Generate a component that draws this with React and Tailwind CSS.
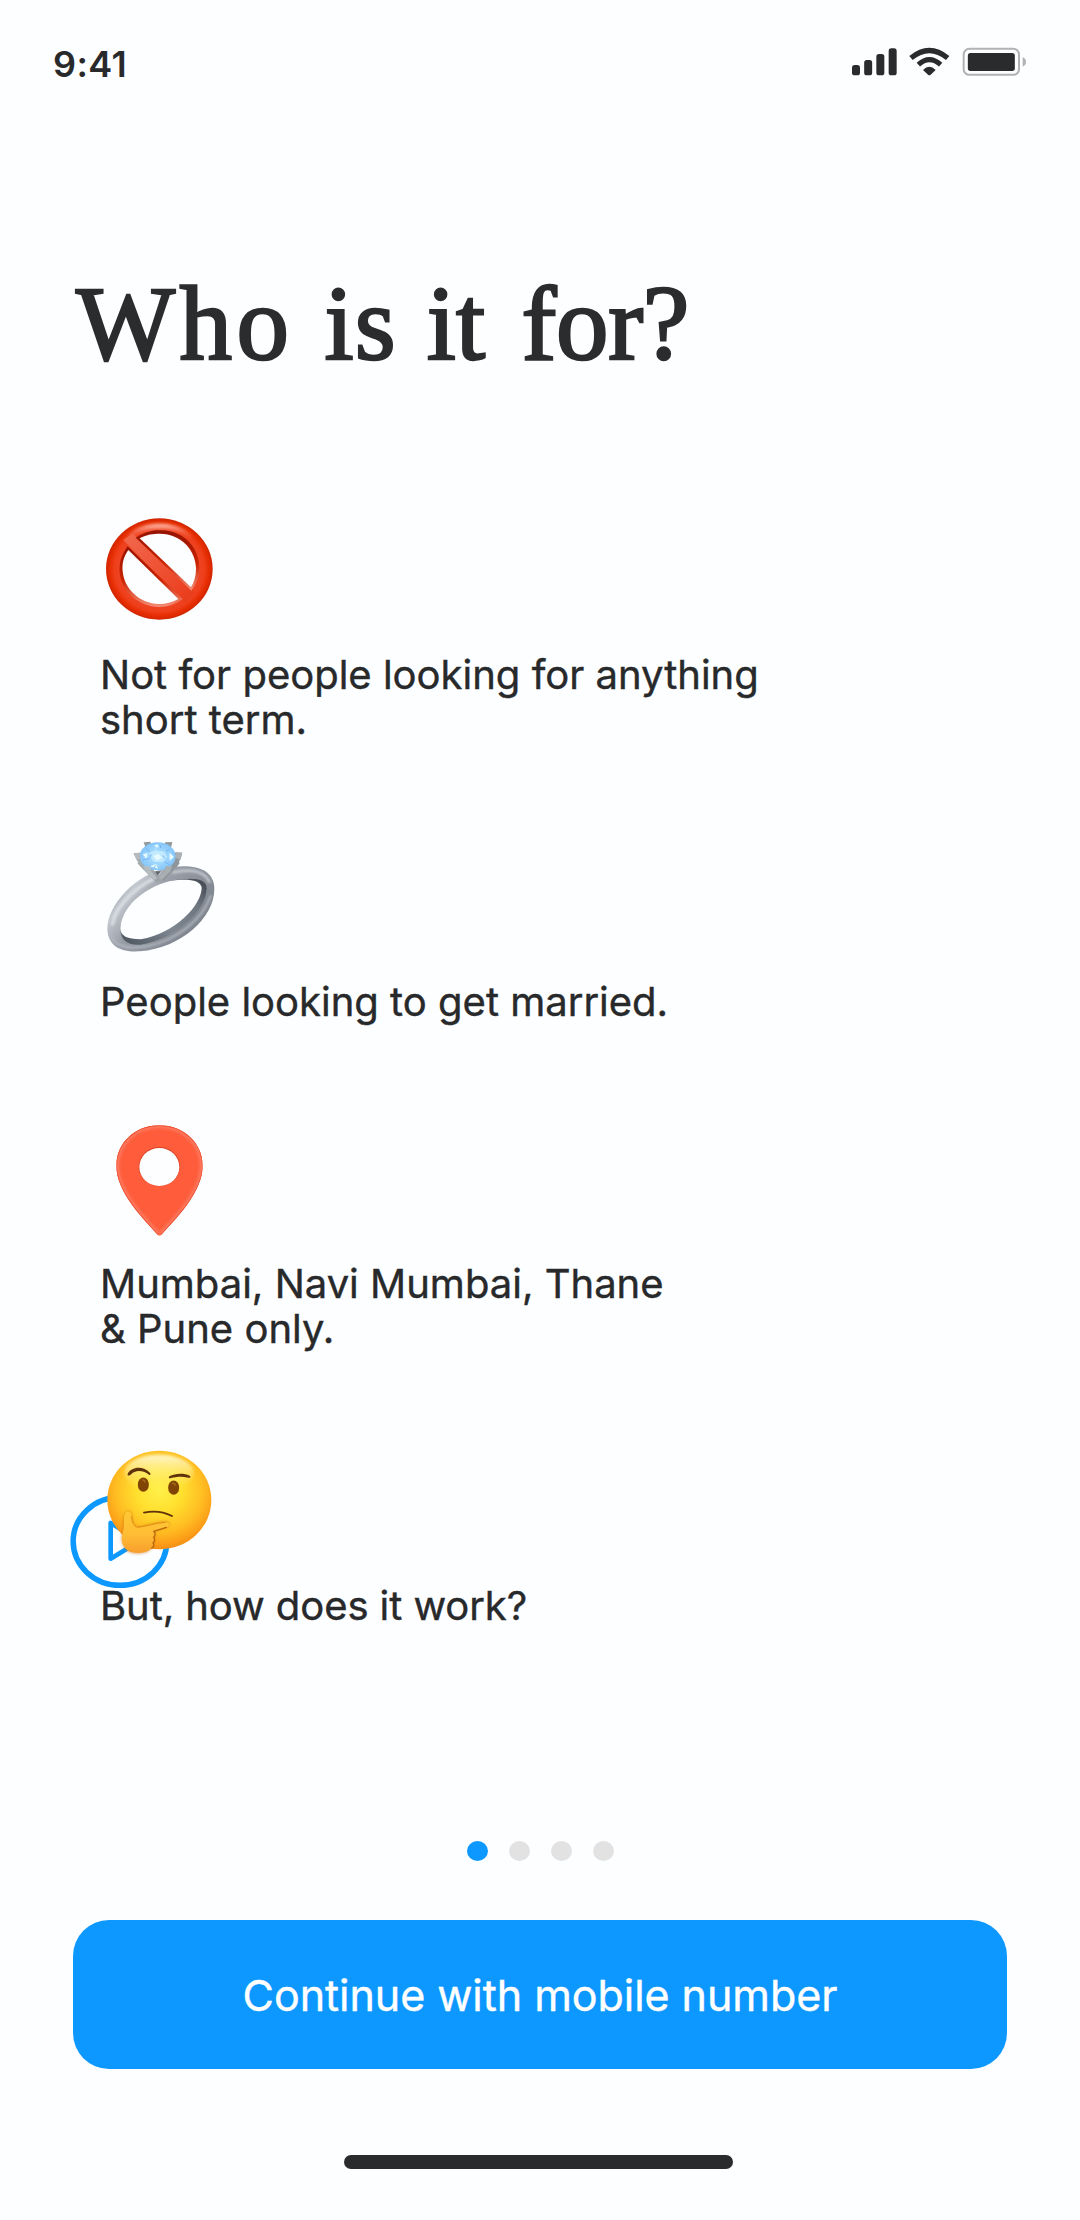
import React from "react";

function StatusIcons() {
  return (
    <svg className="mt-[2px] h-8 w-[178px]" viewBox="60 48 534 96" fill="#2a2b2d">
      <rect x="66" y="105" width="24" height="31" rx="8" />
      <rect x="102.5" y="90" width="24" height="46" rx="8" />
      <rect x="139" y="72" width="24" height="64" rx="8" />
      <rect x="176" y="55" width="24" height="81" rx="8" />
      <path d="M243 84Q298 39 353 84" fill="none" stroke="#2a2b2d" strokeWidth="16" />
      <path d="M265 104Q298 74 332 104" fill="none" stroke="#2a2b2d" strokeWidth="15" />
      <path d="M279 120Q298 101 317 120L302 134Q298 138 294 134Z" />
      <rect x="401" y="56.5" width="166" height="78" rx="17" fill="none" stroke="#b1b2b4" strokeWidth="6" />
      <rect x="413.500" y="69" width="141" height="54" rx="8" />
      <path d="M578 81Q588 86 588 96T578 110Z" fill="#b1b2b4" />
    </svg>
  );
}

function ProhibitedIcon() {
  return (
    <svg className="block size-[120px]" viewBox="30 27 360 360">
      <defs>
        <radialGradient id="banBody" cx="0.5" cy="0.5" r="0.5">
          <stop offset="0.66" stopColor="#ef4726" />
          <stop offset="0.84" stopColor="#ee3f1c" />
          <stop offset="0.93" stopColor="#e62c00" />
          <stop offset="1" stopColor="#cf2600" />
        </radialGradient>
        <linearGradient id="banShine" x1="0" y1="0" x2="0" y2="1">
          <stop offset="0" stopColor="#ffc9bb" stopOpacity="0.95" />
          <stop offset="0.28" stopColor="#ff9a84" stopOpacity="0.5" />
          <stop offset="0.6" stopColor="#ff8065" stopOpacity="0" />
        </linearGradient>
        <linearGradient id="banBar" x1="0" y1="0" x2="1" y2="1">
          <stop offset="0" stopColor="#f0694e" />
          <stop offset="0.35" stopColor="#f0583c" />
          <stop offset="0.75" stopColor="#ec4626" />
          <stop offset="1" stopColor="#e83818" />
        </linearGradient>
        <linearGradient id="banEdge" x1="0" y1="0" x2="0" y2="1">
          <stop offset="0" stopColor="#951300" />
          <stop offset="0.55" stopColor="#c92300" />
          <stop offset="1" stopColor="#f58d78" />
        </linearGradient>
        <filter id="banSoft" x="-20%" y="-20%" width="140%" height="140%">
          <feGaussianBlur stdDeviation="5" />
        </filter>
      </defs>
      <ellipse cx="208" cy="207" rx="160" ry="152" fill="url(#banBody)" />
      <path d="M84 150C108 91 155 71 209 71S310 92 334 150C300 105 265 88 209 88S118 108 84 150Z" fill="url(#banShine)" filter="url(#banSoft)" />
      <path d="M100 120L128 100L315 278L284 310Z" fill="url(#banBar)" />
      <path d="M137 113C170 92 197 90 214 91C285 93 328 145 328 205C328 232 319 253 304 272Z" fill="url(#banEdge)" />
      <path d="M113 139C93 166 87 191 89 217C94 277 148 320 207 321C234 321 257 313 278 297Z" fill="url(#banEdge)" />
      <path d="M149 115C171 103 190 101 210 101C273 102 317 149 318 207C318 226 313 246 303 262Z" fill="#fdfeff" />
      <path d="M115 150C101 170 96 190 98 213C102 267 150 311 207 312C228 312 247 307 265 297Z" fill="#fdfeff" />
    </svg>
  );
}

function RingIcon() {
  return (
    <svg className="block size-[120px]" viewBox="30 51 360 360">
      <defs>
        <linearGradient id="ringBand" x1="0" y1="0.2" x2="1" y2="0.8">
          <stop offset="0" stopColor="#7d838c" />
          <stop offset="0.2" stopColor="#c3c7cf" />
          <stop offset="0.4" stopColor="#989ea7" />
          <stop offset="0.62" stopColor="#8b919a" />
          <stop offset="1" stopColor="#747b84" />
        </linearGradient>
        <linearGradient id="ringInside" x1="0" y1="1" x2="1" y2="0">
          <stop offset="0" stopColor="#4a525b" />
          <stop offset="0.4" stopColor="#7e8791" />
          <stop offset="0.75" stopColor="#6d757f" />
          <stop offset="1" stopColor="#3c434b" />
        </linearGradient>
        <radialGradient id="gem" cx="0.5" cy="0.5" r="0.55">
          <stop offset="0" stopColor="#d9f6ff" />
          <stop offset="0.5" stopColor="#a9defd" />
          <stop offset="1" stopColor="#78bdf8" />
        </radialGradient>
        <filter id="ringSoft" x="-20%" y="-20%" width="140%" height="140%">
          <feGaussianBlur stdDeviation="3" />
        </filter>
      </defs>
      <path d="M52 326C51 260 132 162 240 142C315 131 373 148 373 207C373 292 275 384 150 394C93 398 53 378 52 326Z" fill="url(#ringBand)" />
      <path d="M67 312C78 255 145 187 232 160" fill="none" stroke="#d8dce2" strokeWidth="10" strokeLinecap="round" filter="url(#ringSoft)" />
      <path d="M250 157C305 145 345 155 358 185" fill="none" stroke="#c4c8cf" strokeWidth="8" strokeLinecap="round" filter="url(#ringSoft)" />
      <path d="M62 345C75 385 125 386 170 379C260 362 338 298 362 228" fill="none" stroke="#b3b8c0" strokeWidth="6" strokeLinecap="round" filter="url(#ringSoft)" />
      <path d="M91 325C92 267 155 204 240 183C306 170 350 174 350 205C349 274 252 360 151 374C112 376 91 361 91 325Z" fill="url(#ringInside)" />
      <path d="M91 325C92 267 155 204 240 183C291 175 331 179 335 203C335 254 258 339 152 358C112 358 91 348 91 325Z" fill="#fdfeff" />
      <path d="M142 130L158 122L208 166L254 122L270 129L216 186L198 187Z" fill="#9da3a7" />
      <path d="M130 100L151 98L158 120L200 174L190 178L150 138Z" fill="#a6adaf" />
      <path d="M277 98L256 97L249 121L207 174L222 182L264 136Z" fill="#8f969b" />
      <path d="M161 67L181 65L186 83L169 89Z" fill="#92999d" />
      <path d="M225 67L247 66L242 87L224 84Z" fill="#92999d" />
      <ellipse cx="203" cy="109" rx="54" ry="42" fill="url(#gem)" />
      <path d="M160 92L183 77L196 91L219 75L241 92L231 111L246 124L216 145L203 132L180 144L165 126L177 108Z" fill="#8cc8fb" opacity="0.45" />
      <path d="M177 99L196 91L224 95L231 111L218 127L190 125Z" fill="#c6ecff" opacity="0.85" />
      <path d="M190 108L205 101L216 113L201 122ZM158 103L173 99L169 116ZM239 98L252 111L239 122ZM180 139L198 132L204 146ZM192 76L206 73L202 84Z" fill="#e6faff" />
      <path d="M168 86L179 94M209 73L213 84M238 88L228 94M158 121L178 115M240 135L224 126M190 146L197 136M219 106L224 115M184 103L180 112" stroke="#6fa9ee" strokeWidth="2.500" />
      <path d="M132 99L149 98L152 115L139 119Z" fill="#b4babd" />
      <path d="M258 98L277 98L272 119L256 114Z" fill="#aab1b4" />
      <path d="M160 138L180 140L184 154L201 175L193 180L165 153Z" fill="#b6bdc0" />
      <path d="M227 138L247 139L241 154L214 181L206 172L224 153Z" fill="#a8afb3" />
      <path d="M195 154L203 166L212 154Z" fill="#5f676e" />
    </svg>
  );
}

function PinIcon() {
  return (
    <svg className="block size-[120px]" viewBox="30 30 360 360">
      <defs>
        <filter id="pinSoft" x="-10%" y="-10%" width="120%" height="120%">
          <feGaussianBlur stdDeviation="4" />
        </filter>
        <clipPath id="pinClip">
          <path d="M203 374C190 358 155 324 126 284C97 243 79 204 79 167C79 99 136 46 208 46S338 99 338 167C338 204 320 243 291 284C262 324 227 358 214 374Q208 380 203 374Z" />
        </clipPath>
      </defs>
      <g clipPath="url(#pinClip)">
        <rect x="70" y="40" width="280" height="345" fill="#fe5c3b" />
        <path d="M203 374C190 358 155 324 126 284C97 243 79 204 79 167C79 99 136 46 208 46S338 99 338 167C338 204 320 243 291 284C262 324 227 358 214 374" fill="none" stroke="#fd7c62" strokeWidth="16" filter="url(#pinSoft)" />
        <path d="M203 374C190 358 155 324 126 284C97 243 79 204 79 167C79 99 136 46 208 46S338 99 338 167C338 204 320 243 291 284C262 324 227 358 214 374" fill="none" stroke="#ea4f31" strokeWidth="4" />
      </g>
      <ellipse cx="208" cy="170" rx="62" ry="59" fill="#dd4023" />
      <ellipse cx="208" cy="171" rx="60" ry="57" fill="#fdfeff" />
    </svg>
  );
}

function PlayIcon() {
  return (
    <svg className="absolute -left-[30px] top-[52px] h-[95px] w-[100px]" viewBox="30 192 300 285" fill="none" stroke="#0c98ff">
      <ellipse cx="180" cy="334" rx="140.500" ry="132" strokeWidth="16.500" />
      <path d="M152 279V386L240 332.500Z" strokeWidth="14" strokeLinejoin="round" />
    </svg>
  );
}

function ThinkingIcon() {
  return (
    <svg className="relative block size-[120px]" viewBox="120 36 360 360">
      <defs>
        <radialGradient id="faceBody" cx="0.5" cy="0.4" r="0.62">
          <stop offset="0" stopColor="#fff04a" />
          <stop offset="0.35" stopColor="#ffe02f" />
          <stop offset="0.68" stopColor="#ffbd22" />
          <stop offset="0.88" stopColor="#fc9d18" />
          <stop offset="1" stopColor="#ee8813" />
        </radialGradient>
        <linearGradient id="faceShine" x1="0" y1="0" x2="0" y2="1">
          <stop offset="0" stopColor="#fffce0" stopOpacity="0.9" />
          <stop offset="1" stopColor="#fff36a" stopOpacity="0" />
        </linearGradient>
        <linearGradient id="hand" x1="0" y1="0" x2="0" y2="1">
          <stop offset="0" stopColor="#ffc934" />
          <stop offset="0.55" stopColor="#ffbd35" />
          <stop offset="1" stopColor="#f79e2c" />
        </linearGradient>
        <filter id="faceSoft" x="-20%" y="-20%" width="140%" height="140%">
          <feGaussianBlur stdDeviation="4" />
        </filter>
      </defs>
      <ellipse cx="298" cy="210" rx="156" ry="148" fill="url(#faceBody)" />
      <ellipse cx="297" cy="128" rx="104" ry="54" fill="url(#faceShine)" filter="url(#faceSoft)" />
      <path d="M203 132C213 111 249 105 271 130C273 134 269 137 265 133C247 120 225 120 212 134C207 138 201 137 203 132Z" fill="#60320b" />
      <path d="M328 139C345 130 371 129 389 137C394 141 390 144 385 143C366 139 350 140 331 145C326 146 325 142 328 139Z" fill="#60320b" />
      <ellipse cx="250" cy="164" rx="16.500" ry="21.500" fill="#804504" />
      <ellipse cx="341" cy="173" rx="16.500" ry="21.500" fill="#804504" />
      <path d="M246 151Q254 147 255 158M336 161Q344 156 346 167" fill="none" stroke="#a86c20" strokeWidth="4" />
      <path d="M252 248C280 242 310 245 336 258" fill="none" stroke="#60320b" strokeWidth="5.500" strokeLinecap="round" />
      <path d="M188 301C191 278 187 265 195 250C203 238 216 245 216 258C216 273 220 286 231 291C258 288 291 276 315 274C331 273 333 289 319 293L280 304C289 313 285 321 280 323C287 331 284 338 278 340C284 348 280 354 275 355C265 370 239 373 217 369C195 366 182 339 185 319Z" fill="#c96c0c" opacity="0.6" filter="url(#faceSoft)" />
      <path d="M190 300C194 278 189 265 195 250C203 239 215 245 215 258C215 275 221 288 233 292C260 289 291 278 316 277C332 277 332 289 319 292L281 303C290 312 287 320 281 322C288 330 285 337 279 339C285 347 281 353 275 354C264 368 239 371 217 367C195 363 182 340 186 318Z" fill="url(#hand)" />
      <path d="M215 259C215 275 221 288 233 292C260 289 291 278 316 277" fill="none" stroke="#e18c18" strokeWidth="3" />
      <path d="M319 292L281 304M281 304Q290 313 281 322Q288 331 279 339Q285 348 275 354" fill="none" stroke="#b9670f" strokeWidth="4" strokeLinecap="round" />
    </svg>
  );
}

const copy =
  "font-['Inter',sans-serif] text-[40px] leading-[44.6px] text-[#28292b] [-webkit-text-stroke:0.4px_#28292b]";

export default function App() {
  return (
    <div className="h-[2220px] w-[1080px] overflow-hidden bg-[#fdfeff]">
      <header className="flex h-[120px] items-start justify-between pl-[53px] pr-[52px] pt-[44px]">
        <span className="font-['Inter',sans-serif] text-[36px] font-semibold leading-10 tracking-[0.4px] text-[#28292b]">9:41</span>
        <StatusIcons />
      </header>

      <h1 className="ml-[76px] mt-[151px] whitespace-nowrap font-['Liberation_Serif',serif] text-[105px] leading-[106px] text-[#2b2c2e] [-webkit-text-stroke:2.4px_#2b2c2e]">
        <span className="mr-[5px] tracking-[4.4px]">Who</span> <span className="mr-[4px] tracking-[1px]">is</span>{" "}
        <span className="mr-[10px]">it</span> <span className="-tracking-[0.4px]">for?</span>
      </h1>

      <main className="mt-[132px] pl-[100px]">
        <section>
          <ProhibitedIcon />
          <p className={`${copy} mt-[24px]`}>
            Not for people looking for anything
            <br />
            short term.
          </p>
        </section>
        <section className="mt-[94.8px]">
          <RingIcon />
          <p className={`${copy} mt-[23px]`}>People looking to get married.</p>
        </section>
        <section className="mt-[95.4px]">
          <PinIcon />
          <p className={`${copy} mt-[22.5px]`}>
            Mumbai, Navi Mumbai, Thane
            <br />
            &amp; Pune only.
          </p>
        </section>
        <section className="relative mt-[90.3px]">
          <PlayIcon />
          <ThinkingIcon />
          <p className={`${copy} relative mt-[22.3px] tracking-[-0.08px]`}>But, how does it work?</p>
        </section>
      </main>

      <nav className="mt-[212px] flex justify-center gap-[21px]">
        <span className="h-5 w-[21px] rounded-[50%] bg-[#0c98ff]" />
        <span className="h-5 w-[21px] rounded-[50%] bg-[#e2e2e2]" />
        <span className="h-5 w-[21px] rounded-[50%] bg-[#e2e2e2]" />
        <span className="h-5 w-[21px] rounded-[50%] bg-[#e2e2e2]" />
      </nav>

      <button className="mx-[73px] mt-[59px] flex h-[149px] w-[934px] items-center justify-center rounded-[36px] bg-[#0c98ff] pt-px font-['Inter',sans-serif] text-[43px] leading-[52px] tracking-[-0.05px] text-white [-webkit-text-stroke:0.4px_white]">
        Continue with mobile number
      </button>

      <div className="ml-[344px] mt-[86px] h-[14px] w-[389px] rounded-full bg-[#2a2b2d]" />
    </div>
  );
}
